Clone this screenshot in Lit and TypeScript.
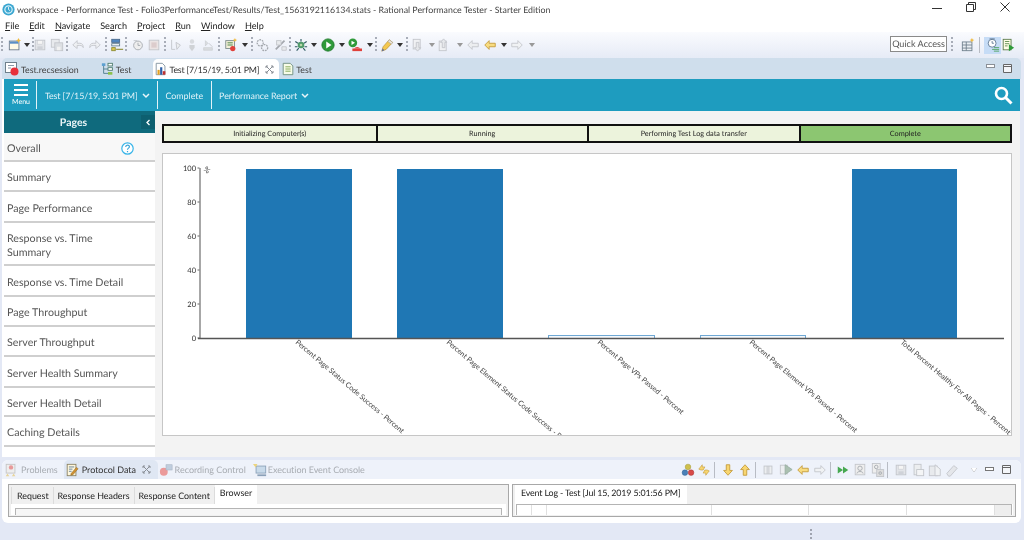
import { LitElement, html, css, svg } from "lit";
import { customElement } from "lit/decorators.js";

const G = "#c2c5ca", GD = "#a4a8ae", Y = "#f0b93a", YD = "#c49a3a", R = "#e0403a";

const icons: Record<string, any> = {
  newwin: svg`<rect x="1.5" y="3.5" width="11" height="10" fill="#fffbe8" stroke="#6b7a8c"/><rect x="2" y="4" width="10" height="2.5" fill="#5b8fc7"/><path d="M12 0l1 2 2 .5-2 1-1 2-1-2-2-1 2-.5z" fill="${Y}"/>`,
  save: svg`<rect x="2.5" y="2.5" width="11" height="11" fill="#e2e4e8" stroke="${G}"/><rect x="5" y="3" width="6" height="4" fill="#f5f5f5" stroke="${G}" stroke-width=".5"/><rect x="5" y="9.5" width="6" height="4" fill="#cfd2d8"/>`,
  saveall: svg`<rect x="1.5" y="1.5" width="9" height="9" fill="#e8eaed" stroke="${G}"/><rect x="5.5" y="5.5" width="9" height="9" fill="#dcdfe3" stroke="${G}"/><rect x="8" y="10" width="4" height="4" fill="#f2f2f2"/>`,
  undo: svg`<path d="M2 8l5-5v3h3c3 0 4 2 4 5 -1-2-2-2.500-4-2.500H7v3.500z" fill="#eef0f3" stroke="${G}"/>`,
  redo: svg`<path d="M14 8L9 3v3H6c-3 0-4 2-4 5 1-2 2-2.500 4-2.500h3v3.500z" fill="#eef0f3" stroke="${G}"/>`,
  fork: svg`<rect x="2" y="1.500" width="9" height="3.500" fill="#4f86c0" stroke="#4a6a8c"/><rect x="2" y="6.500" width="9" height="2.500" fill="#fff" stroke="#5a7a8c"/><rect x="2" y="11" width="4" height="3.500" fill="#e0c850" stroke="#8a8a30"/><path d="M7 13h8" stroke="#9a9a50" stroke-width="1.500"/>`,
  clock: svg`<circle cx="8" cy="8.500" r="5" fill="#eee" stroke="${GD}"/><path d="M8 5.500v3h2.500" stroke="${GD}" fill="none"/><path d="M3 3h4" stroke="${G}"/>`,
  stop: svg`<rect x="2.500" y="2.500" width="11" height="11" fill="#ebe4e4" stroke="${G}"/><rect x="5" y="5" width="6" height="6" fill="#dccccc"/>`,
  g1: svg`<path d="M3 2v11M3 13h4" stroke="${G}" fill="none"/><path d="M8 5l5 3-4 5z" fill="#eceef0" stroke="${G}"/>`,
  g2: svg`<circle cx="8" cy="4" r="2.500" fill="#d8dbdf"/><path d="M5 8h6v3l-3 4-3-4z" fill="#cfd2d6"/>`,
  g3: svg`<path d="M5 3l3 3-3 3zM3 11h10v3H3z" fill="#dadde0" stroke="${G}" stroke-width=".6"/><path d="M9 6l4 4" stroke="${G}"/>`,
  props: svg`<rect x="2" y="3" width="10" height="9" fill="#f2efd8" stroke="#7a8a8a"/><path d="M4 5.500h6M4 8h6" stroke="#3c7a3c"/><circle cx="10" cy="12" r="3" fill="${R}"/><path d="M12.500 0l.8 1.700 1.700.5-1.700.8-.8 1.700-.8-1.700-1.700-.8 1.700-.5z" fill="${Y}"/>`,
  gears: svg`<circle cx="6" cy="5.500" r="3.500" fill="none" stroke="${GD}" stroke-width="1.500" stroke-dasharray="2 1"/><circle cx="11" cy="11" r="3.500" fill="none" stroke="${GD}" stroke-width="1.500" stroke-dasharray="2 1"/>`,
  wand: svg`<path d="M2 13L12 3" stroke="${GD}" stroke-width="2"/><rect x="3" y="3" width="5" height="5" fill="#e8eaed" stroke="${G}"/><path d="M9 10h5v4H9z" fill="#e8eaed" stroke="${G}"/>`,
  debug: svg`<circle cx="8" cy="8" r="3.800" fill="#4f9a6a"/><circle cx="8" cy="8" r="1.500" fill="#b8d8a8"/><path d="M8 1v3M1.500 4l3 2M14.500 4l-3 2M1 10h3M15 10h-3M3 14.500l2.500-3M13 14.500l-2.500-3" stroke="#2f5a62" stroke-width="1.300"/>`,
  run: svg`<circle cx="8" cy="8" r="7" fill="#2f9a3a" stroke="#1f7a2c"/><path d="M6 4l6 4-6 4z" fill="#fff"/>`,
  runrec: svg`<circle cx="5.500" cy="5.500" r="5" fill="#2f9a3a"/><path d="M4 3l4 2.500L4 8z" fill="#fff"/><path d="M7 12a4 3.500 0 0 1 7 0z" fill="${R}"/><rect x="5" y="12" width="11" height="3" fill="${R}"/>`,
  pencil: svg`<path d="M2 15l1.500-5 7-8 4 3-7.500 8z" fill="#f4c850" stroke="#b08a30" stroke-width=".7"/><path d="M10.500 2l4 3-1.500 2-4-3z" fill="#eee6d6" stroke="#9a9a9a" stroke-width=".6"/><path d="M2 15l1-3 2 2z" fill="#5a6a9a"/>`,
  nextann: svg`<rect x="2.500" y="1.500" width="8" height="11" fill="#f0f1f3" stroke="${G}"/><path d="M6 5v6H4l3.500 4L11 11H9V5z" fill="#e6e8eb" stroke="${G}"/>`,
  prevann: svg`<rect x="2.500" y="3.500" width="8" height="11" fill="#f0f1f3" stroke="${G}"/><path d="M6 11V5H4l3.500-4L11 5H9v6z" fill="#e6e8eb" stroke="${G}"/>`,
  bleft: svg`<path d="M7 3L2 8l5 5v-3h7V6H7z" fill="#eceef0" stroke="${G}"/>`,
  yleft: svg`<path d="M7 3L2 8l5 5v-3h7V6H7z" fill="#f8dc80" stroke="${YD}"/>`,
  gright: svg`<path d="M9 3l5 5-5 5v-3H2V6h7z" fill="#f0f2f4" stroke="${G}"/>`,
  ydown: svg`<path d="M3 8.500l5 5.500 5-5.500h-3V2H6v6.500z" fill="#f8d670" stroke="${YD}"/>`,
  yup: svg`<path d="M3 7.500L8 2l5 5.500h-3V14H6V7.500z" fill="#f8d670" stroke="${YD}"/>`,
  newtab: svg`<rect x="1.500" y="4.500" width="11" height="10" fill="#e9eef2" stroke="#6e7f8c"/><path d="M1.500 8h11M1.500 11.500h11M6 4.500v10" stroke="#6e7f8c"/><path d="M12.500 0l.9 1.800 1.800.6-1.800.7-.9 1.900-.9-1.900-1.800-.7 1.800-.6z" fill="${Y}"/>`,
  perfp: svg`<circle cx="7" cy="6" r="4.500" fill="#fff" stroke="#5a7590"/><path d="M7 3.500V6h2" stroke="#5a7590" fill="none"/><path d="M4 1h6" stroke="#5a7590"/><path d="M7 13h8M9 11h6M9 15h6" stroke="#4ca05c"/>`,
  testrun: svg`<rect x="2.500" y="1.500" width="9" height="12" fill="#fffde6" stroke="#5a7a4a"/><path d="M4.500 4h5M4.500 6.500h5M4.500 9h3" stroke="#5a8a4a"/><path d="M9 7l6 4-6 4z" fill="#2f9a3a"/>`,
  recs: svg`<rect x="1.500" y="1.500" width="11" height="10" fill="#fff" stroke="#6e7f8c"/><path d="M4 4.500h6M4 7h3" stroke="#8a98a8"/><circle cx="10.500" cy="10.500" r="4" fill="#e8303a"/>`,
  tree: svg`<rect x="1" y="1.500" width="4" height="3" fill="#5b9fd0"/><rect x="8" y="1.500" width="5" height="3" fill="#fff" stroke="#4a7a6a"/><rect x="8" y="6.500" width="5" height="3" fill="#fff" stroke="#4a7a6a"/><rect x="8" y="11.500" width="5" height="3" fill="#8ac04a"/><path d="M3 4.500v8.500h5M3 8h5" stroke="#4a7a8a" fill="none"/>`,
  report: svg`<path d="M2.500 1.500h7l3 3v10h-10z" fill="#fff" stroke="#7e8f9c"/><rect x="4" y="9" width="2.500" height="5.500" fill="#e2a020"/><rect x="7" y="6" width="2.500" height="8.500" fill="#2e5fa8"/><rect x="10" y="10.500" width="3" height="4" fill="#c03030"/>`,
  sched: svg`<path d="M2.500 1.500h8l3 3v10h-11z" fill="#f8fce8" stroke="#6a8a7a"/><path d="M5 5.500h6M5 8h6M5 10.500h6" stroke="#7aa04a"/>`,
  problems: svg`<rect x="2.500" y="1.500" width="10" height="10" fill="#eee" stroke="#c4c4c4"/><circle cx="8" cy="5" r="2.500" fill="#e89a9a"/><path d="M2 15l2-3 2 3zM9 15l2-3 2 3z" fill="#e8d49a"/>`,
  protocol: svg`<rect x="2.500" y="1.500" width="10" height="13" fill="#fdf6dc" stroke="#8a8060"/><path d="M4.500 4.500h6M4.500 7h4M4.500 9.500h3" stroke="#5a7a9a"/><path d="M7 12l6-7 2 1.500-6 7-2.500.5z" fill="#d09030" stroke="#806020" stroke-width=".5"/>`,
  recctl: svg`<circle cx="5.500" cy="10" r="4.500" fill="#eb9a9a"/><rect x="8" y="2" width="7" height="6" fill="#c0cede" stroke="#a4b0c0" stroke-width=".6"/>`,
  exec: svg`<rect x="3.500" y="3.500" width="11" height="8" fill="#c8daea" stroke="#8aa0b8"/><path d="M5 14h10" stroke="#8aa0b8" stroke-width="2"/><path d="M0 1h5l-2 4z" fill="#ecd47c"/>`,
  filter: svg`<circle cx="8" cy="4.500" r="3.200" fill="#cfc04c" stroke="#9a9030" stroke-width=".5"/><circle cx="4.500" cy="11" r="3.200" fill="#4a80b8" stroke="#2a5a8c" stroke-width=".5"/><circle cx="11.500" cy="11" r="3.200" fill="#d84a4a" stroke="#a03030" stroke-width=".5"/>`,
  sync: svg`<path d="M2 7l4-5v2.500h3L7 8H4.500z" fill="#f8d670" stroke="${YD}" stroke-width=".7"/><path d="M14 9l-4 5v-2.500H7L9 8h2.500z" fill="#f8d670" stroke="${YD}" stroke-width=".7"/>`,
  pause: svg`<rect x="3.500" y="3.500" width="9" height="9" fill="#eceef0" stroke="${G}"/><path d="M7 3.500v9M9 3.500v9" stroke="${G}"/>`,
  stepgo: svg`<rect x="1.500" y="2.500" width="8" height="10" fill="#eceef0" stroke="${G}"/><path d="M7 2l8 5.500L7 13z" fill="#aac0b0" stroke="#9ab0a4"/>`,
  play2: svg`<path d="M2 4l6 4-6 4zM8 4l6 4-6 4z" fill="#46a850"/>`,
  user1: svg`<rect x="2.500" y="1.500" width="11" height="12" fill="#eee" stroke="${G}"/><circle cx="8" cy="6" r="2.500" fill="none" stroke="${GD}"/><path d="M4.500 12c0-3 7-3 7 0" stroke="${GD}" fill="none"/>`,
  user2: svg`<rect x="1.500" y=".5" width="9" height="11" fill="#eee" stroke="${G}"/><rect x="6.500" y="7.500" width="8" height="8" fill="#ddd" stroke="${G}"/><circle cx="6" cy="4.500" r="2" fill="none" stroke="${GD}"/><circle cx="10.500" cy="11.500" r="1.500" fill="none" stroke="${GD}"/>`,
  clip: svg`<rect x="3.500" y="1.500" width="8" height="12" fill="#eceef0" stroke="${G}"/><rect x="6.500" y="7.500" width="8" height="7" fill="#f4f5f6" stroke="${G}"/>`,
  paste: svg`<rect x="1.500" y="3.500" width="9" height="11" fill="#e8eaed" stroke="${G}"/><path d="M8 2l6 5v7.500H8z" fill="#f0f2f4" stroke="${G}"/>`,
  eraser: svg`<path d="M2 12l8-9 4 3-8 9H4z" fill="#e4e6ea" stroke="${G}"/>`,
};

const ic = (n: string, s = 16) => html`<svg class="ic" width=${s} height=${s} viewBox="0 0 16 16">${icons[n]}</svg>`;

type Tb = { x: number; k: string };
const mainTb: Tb[] = [
  { x: 2, k: "|" }, { x: 15, k: "newwin" }, { x: 27, k: "v" }, { x: 34, k: "|" }, { x: 41, k: "save" }, { x: 58, k: "saveall" },
  { x: 68, k: "|" }, { x: 79, k: "undo" }, { x: 96, k: "redo" }, { x: 107, k: "|" }, { x: 118, k: "fork" }, { x: 127, k: "|" },
  { x: 139, k: "clock" }, { x: 155, k: "stop" }, { x: 166, k: "|" }, { x: 177, k: "g1" }, { x: 193, k: "g2" }, { x: 209, k: "g3" },
  { x: 220, k: "|" }, { x: 232, k: "props" }, { x: 246, k: "v" }, { x: 254, k: "|" }, { x: 264, k: "gears" }, { x: 283, k: "wand" },
  { x: 292, k: "|" }, { x: 303, k: "debug" }, { x: 316, k: "v" }, { x: 331, k: "run" }, { x: 345, k: "v" }, { x: 359, k: "runrec" },
  { x: 374, k: "v" }, { x: 381, k: "|" }, { x: 392, k: "pencil" }, { x: 405, k: "v" }, { x: 413, k: "|" }, { x: 424, k: "nextann" },
  { x: 438, k: "w" }, { x: 451, k: "prevann" }, { x: 467, k: "w" }, { x: 481, k: "bleft" }, { x: 498, k: "yleft" }, { x: 512, k: "v" },
  { x: 526, k: "gright" }, { x: 541, k: "w" },
];
const botTb: Tb[] = [
  { x: 688, k: "filter" }, { x: 704, k: "sync" }, { x: 715, k: "l" }, { x: 728, k: "ydown" }, { x: 745, k: "yup" }, { x: 756, k: "l" },
  { x: 768, k: "pause" }, { x: 786, k: "stepgo" }, { x: 803, k: "yleft" }, { x: 820, k: "gright" }, { x: 831, k: "l" }, { x: 843, k: "play2" },
  { x: 860, k: "user1" }, { x: 878, k: "user2" }, { x: 888, k: "l" }, { x: 901, k: "save" }, { x: 918, k: "clip" }, { x: 935, k: "paste" },
  { x: 952, k: "eraser" },
];

function strip(items: Tb[], start: number) {
  let cur = start;
  return items.map((t) => {
    const w = t.k === "|" || t.k === "l" ? 2 : t.k === "v" || t.k === "w" ? 7 : 16;
    const left = t.x - w / 2 - cur;
    cur = t.x + w / 2;
    const cls = t.k === "|" ? "grip" : t.k === "l" ? "vl" : t.k === "v" ? "tri" : t.k === "w" ? "tri pale" : "";
    return cls
      ? html`<span class=${cls} style="margin-left:${left}px"></span>`
      : html`<span class="slot" style="margin-left:${left}px">${ic(t.k, 14)}</span>`;
  });
}

const pages: [string, string][] = [
  ["Overall", "h29"], ["Summary", "h30"], ["Page Performance", "h31"], ["Response vs. Time Summary", "h43"],
  ["Response vs. Time Detail", "h31"], ["Page Throughput", "h30"], ["Server Throughput", "h30"],
  ["Server Health Summary", "h31"], ["Server Health Detail", "h29"], ["Caching Details", "h30"],
];

const OX = 163, OY = 154;
const bars = [
  { x: 246, w: 106, top: 169, l: "Percent Page Status Code Success - Percent", lx: 295 },
  { x: 397, w: 106, top: 169, l: "Percent Page Element Status Code Success - P", lx: 446 },
  { x: 548, w: 107, top: 335, l: "Percent Page VPs Passed - Percent", lx: 597 },
  { x: 700, w: 106, top: 335, l: "Percent Page Element VPs Passed - Percent", lx: 749 },
  { x: 852, w: 105, top: 169, l: "Total Percent Healthy For All Pages - Percent", lx: 900 },
];

@customElement("app-root")
export class AppRoot extends LitElement {
  static styles = css`
    :host { display: block; width: 1024px; height: 540px; overflow: hidden; background: #e3e8f5; font-family: Lato, Roboto, sans-serif; color: #333; text-rendering: geometricPrecision; filter: blur(.3px); }
    .ic { display: block; }
    .titlebar { height: 18px; box-sizing: border-box; padding-top: 1px; background: #fff; display: flex; align-items: center; padding-left: 2px; font-size: 8.800px; color: #444; }
    .logo { width: 13px; height: 13px; margin-right: 2px; }
    .winctl { margin-left: auto; display: flex; align-self: flex-start; margin-right: 13px; }
    .winctl svg { display: block; margin-left: 22px; }
    .winctl svg:first-child { margin-left: 0; }
    .menu { height: 14px; background: #fff; display: flex; align-items: center; padding-left: 5px; gap: 10px; font-size: 9.100px; color: #222; }
    .menu u { text-decoration-thickness: 1px; text-underline-offset: 1px; }
    .toolbar { height: 26px; background: linear-gradient(#fafbfe, #e6ebf6); display: flex; align-items: center; }
    .slot { flex: none; width: 16px; height: 16px; display: flex; align-items: center; justify-content: center; }
    .grip { flex: none; width: 2px; height: 16px; background: repeating-linear-gradient(#a8adb8 0 2px, transparent 2px 4px); }
    .vl { flex: none; width: 1px; margin-right: 1px; height: 16px; background: #b8bcc4; }
    .tri { flex: none; width: 0; height: 0; border: 3.5px solid transparent; border-bottom: 0; border-top: 4px solid #333; }
    .tri.pale { border-top-color: #999; }
    .quick { margin-left: auto; width: 55px; height: 14px; margin-bottom: 2px; border: 1px solid #8a8a8a; background: #fff; color: #555; font-size: 9.100px; line-height: 14px; text-align: center; flex: none; white-space: nowrap; }
    .tr { margin-left: 4px; display: flex; align-items: center; margin-right: 8px; }
    .tr .slot { margin-left: 7px; }
    .tr .active { margin-left: 4px; width: 17px; height: 17px; background: #c6dcf6; display: flex; align-items: center; justify-content: center; }
    .tr .active + .slot { margin-left: -1px; }
    .tr .vl { margin-left: 3px; margin-right: 0; }
    .tabbar { height: 21px; margin: 0 3px 0 2px; background: #cfdeec; border-radius: 5px 5px 0 0; display: flex; align-items: flex-end; font-size: 8.800px; color: #444; }
    .tab { display: flex; align-items: center; height: 20px; }
    .tab .ic { margin-right: 1px; }
    .tab.sel { background: #fff; border-radius: 5px 5px 0 0; padding: 0 5px 0 1px; height: 20px; margin-left: 22px; color: #333; letter-spacing: -.2px; }
    .x { margin-left: 6px; }
    .viewbtn { margin-left: auto; display: flex; gap: 8px; padding: 0 9px 6px 0; align-self: flex-end; }
    .viewbtn svg { display: block; }
    .editor { height: 378px; margin: 0 4px 0 2px; background: #fff; padding-left: 2px; display: flex; flex-direction: column; }
    .rhead { height: 32px; background: #1e9cbf; flex: none; display: flex; align-items: center; color: #dff2f8; font-size: 8.850px; padding-right: 7px; }
    .burger { width: 30px; margin-left: 2px; display: flex; flex-direction: column; align-items: center; color: #fff; font-size: 7px; line-height: 9px; }
    .burger svg { display: block; margin-bottom: 1px; }
    .sep { width: 1px; height: 28px; background: #e3f3f8; flex: none; }
    .hitem { padding: 1px 7px 0 8px; display: flex; align-items: center; gap: 4px; white-space: nowrap; }
    .hitem.t { letter-spacing: -.1px; }
    .hitem.c { padding-right: 8px; }
    .hitem.r { padding-left: 7px; }
    .search { margin-left: auto; display: block; }
    .rbody { flex: 1; min-height: 0; display: flex; background: #f3f3f3; }
    .side { width: 151px; flex: none; background: #fff; display: flex; flex-direction: column; }
    .shead { height: 22px; box-sizing: border-box; padding-top: 1px; background: #0f6a7d; color: #e8f4f6; font-size: 10.500px; font-weight: 700; display: flex; align-items: center; justify-content: center; position: relative; padding-right: 12px; }
    .collapse { position: absolute; right: 0; top: 4px; width: 14px; height: 14px; background: #0d5f70; display: flex; align-items: center; justify-content: center; }
    .pg { border-bottom: 2px solid #cfcfcf; box-sizing: border-box; display: flex; align-items: center; padding-left: 3px; font-size: 10.700px; line-height: 14px; color: #555; justify-content: space-between; padding-top: 4px; }
    .pg.first { padding-right: 21px; background: #f8f8f8; }
    .h29 { height: 29px; } .h30 { height: 30px; } .h31 { height: 31px; } .h43 { height: 43px; }
    .pg span { max-width: 124px; }
    .main { flex: 1; min-width: 0; padding: 13px 8px 0 7px; display: flex; flex-direction: column; gap: 10px; }
    .prog { display: grid; grid-template-columns: repeat(4, 1fr); height: 19px; box-sizing: border-box; border: 2px solid #111; background: #ecf3dc; font-size: 7.300px; color: #222; }
    .prog div { display: flex; align-items: center; justify-content: center; border-left: 2px solid #111; }
    .prog div:first-child { border-left: 0; }
    .prog .done { background: #8cc671; }
    .chart { height: 283px; box-sizing: border-box; border: 1px solid #c6c6c6; background: #fff; }
    .chart svg { display: block; font-family: Lato, Roboto, sans-serif; }
    .chart .t { font-size: 7.500px; fill: #333; }
    .chart .l { font-size: 7.300px; fill: #444; }
    .bottom { height: 63px; margin: 3px 3px 0 2px; background: #fff; border-radius: 6px; display: flex; flex-direction: column; }
    .btabs { height: 19px; background: #eef2fa; border-radius: 6px 6px 0 0; display: flex; align-items: center; font-size: 9px; color: #a8acb2; padding-left: 2px; flex: none; }
    .btab { display: flex; align-items: center; gap: 1px; height: 19px; white-space: nowrap; }
    .btab.sel { background: #dfe7f3; border-radius: 5px 5px 0 0; color: #333; padding: 0 6.500px 0 1px; margin-left: 6px; }
    .btab.sel .x { margin-left: 5px; }
    .btab.rec { margin-left: 1px; gap: 2px; }
    .btab.ev { margin-left: 7px; letter-spacing: -.05px; }
    .btools { margin-left: auto; width: 340px; display: flex; align-items: center; flex: none; }
    .tri.hollow { margin-left: 10.500px; border-top-color: #fff; filter: drop-shadow(0 0 .5px #555); }
    .vbtn { display: block; margin-left: 8px; }
    .panes { display: flex; padding: 5px 2px 0 6px; height: 33px; gap: 3px; }
    .frame { height: 33px; box-sizing: border-box; border: 1px solid #a8a8a8; background: #f0f0f0; display: flex; flex-direction: column; }
    .frame.a { width: 501px; } .frame.b { width: 504px; }
    .ftabs { display: flex; height: 19px; font-size: 8.900px; color: #222; flex: none; padding-left: 2px; align-items: flex-end; }
    .ft { height: 17px; line-height: 17px; padding: 0 4px; border-right: 1px solid #dcdcdc; border-left: 1px solid #dcdcdc; margin-left: -1px; white-space: nowrap; }
    .ft.first { margin-left: 0; padding-left: 5px; }
    .ft.on { background: #fff; height: 19px; line-height: 16px; border: 0; margin-left: 0; padding: 0 5px; }
    .ft.log { padding: 0 6px; letter-spacing: -.15px; }
    .fbody { flex: 1; background: #fff; margin: 0 2px 1px 2px; padding: 4px 4px 0 4px; min-height: 0; overflow: hidden; }
    .fbody.tbl { padding: 0 1px; }
    .innerbox { border: 1px solid #b4b4b4; height: 14px; background: #f6f6f6; display: flex; }
    .cols { background: #fff; display: grid; grid-template-columns: 15px 15px 165px 97px 98px 88px 1fr; }
    .cols i { border-right: 1px solid #e0e0e0; }
    .cols i:last-child { background: #eee; border: 0; }
    .footer { height: 17px; display: flex; padding-left: 810px; padding-top: 6px; box-sizing: border-box; }
    .footer span { width: 2px; height: 10px; background: repeating-linear-gradient(#a0a4b0 0 2px, transparent 2px 4px); }
    .tab.l1 { margin-left: 2px; } .tab.l2 { margin-left: 22px; } .tab.l4 { margin-left: 2px; }
    .gap2 { margin-left: 2px; }
  `;

  render() {
    const closeX = html`<svg class="x" width="9" height="9" viewBox="0 0 9 9"><path d="M1 1l7 7M8 1L1 8M1 3V1h2M6 1h2v2M8 6v2H6M3 8H1V6" stroke="#8a8f96" fill="none"/></svg>`;
    const chev = html`<svg width="8" height="6" viewBox="0 0 8 6"><path d="M1 1l3 3 3-3" stroke="#e8f6fa" stroke-width="1.500" fill="none"/></svg>`;
    return html`
      <div class="titlebar">
        <svg class="logo" viewBox="0 0 16 16"><circle cx="8" cy="8" r="7.500" fill="#3aa6d0"/><circle cx="8" cy="8" r="4.500" fill="none" stroke="#d5eff8" stroke-width="1.500"/><path d="M8 5v3l2 1.500" stroke="#fff" fill="none"/></svg>
        <span>workspace - Performance Test - Folio3PerformanceTest/Results/Test_1563192116134.stats - Rational Performance Tester - Starter Edition</span>
        <div class="winctl">
          <svg width="12" height="12" viewBox="0 0 12 12"><path d="M1 7.500h10" stroke="#333"/></svg>
          <svg width="12" height="12" viewBox="0 0 12 12"><path d="M1.500 3.500h7v7h-7zM3.500 3.500v-2h7v7h-2" fill="none" stroke="#333"/></svg>
          <svg width="12" height="12" viewBox="0 0 12 12"><path d="M1.500 1.500l9 9M10.500 1.500l-9 9" stroke="#333"/></svg>
        </div>
      </div>
      <div class="menu">
        <span><u>F</u>ile</span><span><u>E</u>dit</span><span><u>N</u>avigate</span><span>Se<u>a</u>rch</span><span><u>P</u>roject</span><span><u>R</u>un</span><span><u>W</u>indow</span><span><u>H</u>elp</span>
      </div>
      <div class="toolbar">
        ${strip(mainTb, 0)}
        <div class="quick">Quick Access</div>
        <div class="tr">
          <span class="grip"></span>
          <span class="slot">${ic("newtab", 14)}</span>
          <span class="vl"></span>
          <span class="active">${ic("perfp", 14)}</span>
          <span class="slot">${ic("testrun", 14)}</span>
        </div>
      </div>
      <div class="tabbar">
        <div class="tab l1">${ic("recs")}<span>Test.recsession</span></div>
        <div class="tab l2">${ic("tree", 14)}<span>Test</span></div>
        <div class="tab sel">${ic("report", 14)}<span>Test [7/15/19, 5:01 PM]</span>${closeX}</div>
        <div class="tab l4">${ic("sched", 14)}<span>Test</span></div>
        <div class="viewbtn">
          <svg width="9" height="6" viewBox="0 0 9 6"><rect x=".5" y=".5" width="8" height="3" fill="#fff" stroke="#8a8f96"/></svg>
          <svg width="9" height="9" viewBox="0 0 9 9"><path d="M.5.5h8v8h-8zM.5 2.500h8" fill="#f4f6f9" stroke="#666"/></svg>
        </div>
      </div>
      <div class="editor">
        <div class="rhead">
          <div class="burger">
            <svg width="14" height="14" viewBox="0 0 14 14"><path d="M0 2h14M0 7h14M0 12h14" stroke="#fff" stroke-width="2.200"/></svg>
            Menu
          </div>
          <div class="sep"></div>
          <div class="hitem t">Test [7/15/19, 5:01 PM] ${chev}</div>
          <div class="sep"></div>
          <div class="hitem c">Complete</div>
          <div class="sep"></div>
          <div class="hitem r">Performance Report ${chev}</div>
          <svg class="search" width="19" height="19" viewBox="0 0 19 19"><circle cx="7.500" cy="7.500" r="5.500" fill="none" stroke="#fff" stroke-width="2.600"/><path d="M11.500 11.500l6 6" stroke="#fff" stroke-width="3"/></svg>
        </div>
        <div class="rbody">
          <div class="side">
            <div class="shead">Pages
              <div class="collapse"><svg width="6" height="7" viewBox="0 0 6 7"><path d="M4.500 1L2 3.500 4.500 6" stroke="#fff" stroke-width="1.300" fill="none"/></svg></div>
            </div>
            ${pages.map(([t, h], i) => html`
              <div class="pg ${h} ${i === 0 ? "first" : ""}"><span>${t}</span>
                ${i === 0 ? html`<svg width="13" height="13" viewBox="0 0 13 13"><circle cx="6.500" cy="6.500" r="5.700" fill="#fff" stroke="#38b4e8" stroke-width="1.200"/><path d="M4.700 5c0-2.400 3.700-2.400 3.700-.2 0 1.400-1.900 1.300-1.900 2.900M6.500 9v1.300" stroke="#38a4d8" stroke-width="1.200" fill="none"/></svg>` : ""}
              </div>`)}
          </div>
          <div class="main">
            <div class="prog">
              <div>Initializing Computer(s)</div><div>Running</div><div>Performing Test Log data transfer</div><div class="done">Complete</div>
            </div>
            <div class="chart">
              <svg width="848" height="281" viewBox="${OX} ${OY} 848 281">
                <path d="M200 168V338" stroke="#8a8a8a" stroke-width="1.500"/>
                ${[100, 80, 60, 40, 20, 0].map((v, i) => svg`
                  <text class="t" x="196" y=${171 + i * 34} text-anchor="end">${v}</text>
                  <path d="M197.500 ${168 + i * 34}h2" stroke="#666"/>`)}
                <text class="t" transform="translate(203 170) rotate(40)">%</text>
                ${bars.map((b) => b.top < 200
                  ? svg`<rect x=${b.x} y=${b.top} width=${b.w} height=${338 - b.top} fill="#1f77b4"/>`
                  : svg`<rect x=${b.x + .5} y=${b.top + .5} width=${b.w - 1} height=${338 - b.top} fill="#f4f9fd" stroke="#6fa8d4"/>`)}
                <path d="M198 338.500H1004" stroke="#555" stroke-width="1.300"/>
                ${bars.map((b) => svg`<text class="l" transform="translate(${b.lx} 343) rotate(40.400)">${b.l}</text>`)}
              </svg>
            </div>
          </div>
        </div>
      </div>
      <div class="bottom">
        <div class="btabs">
          <div class="btab">${ic("problems", 14)}<span class="gap2">Problems</span></div>
          <div class="btab sel">${ic("protocol", 14)}<span class="gap2">Protocol Data</span>${closeX}</div>
          <div class="btab rec">${ic("recctl", 14)}<span>Recording Control</span></div>
          <div class="btab ev">${ic("exec", 14)}<span>Execution Event Console</span></div>
          <div class="btools">
            ${strip(botTb, 681)}
            <span class="tri hollow"></span>
            <svg class="vbtn" width="9" height="6" viewBox="0 0 9 6"><rect x=".5" y=".5" width="8" height="3" fill="#fff" stroke="#777"/></svg>
            <svg class="vbtn" width="9" height="9" viewBox="0 0 9 9"><path d="M.5.500h8v8h-8zM.5 2.500h8" fill="#f4f6f9" stroke="#666"/></svg>
          </div>
        </div>
        <div class="panes">
          <div class="frame a">
            <div class="ftabs">
              <div class="ft first">Request</div><div class="ft">Response Headers</div><div class="ft">Response Content</div><div class="ft on">Browser</div>
            </div>
            <div class="fbody"><div class="innerbox"></div></div>
          </div>
          <div class="frame b">
            <div class="ftabs"><div class="ft on log">Event Log - Test [Jul 15, 2019 5:01:56 PM]</div></div>
            <div class="fbody tbl"><div class="innerbox cols"><i></i><i></i><i></i><i></i><i></i><i></i><i></i></div></div>
          </div>
        </div>
      </div>
      <div class="footer"><span></span></div>
    `;
  }
}
